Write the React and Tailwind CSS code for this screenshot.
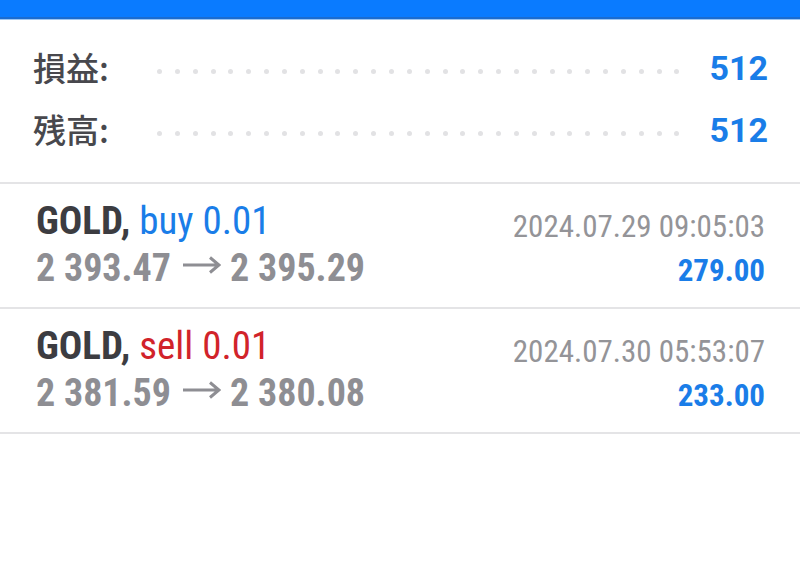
const trades = [
  {
    symbol: "GOLD",
    side: "buy",
    volume: "0.01",
    open: "2 393.47",
    close: "2 395.29",
    time: "2024.07.29 09:05:03",
    profit: "279.00",
  },
  {
    symbol: "GOLD",
    side: "sell",
    volume: "0.01",
    open: "2 381.59",
    close: "2 380.08",
    time: "2024.07.30 05:53:07",
    profit: "233.00",
  },
];

const condensed = {
  fontFamily: '"Roboto Condensed", "DejaVu Sans Condensed", "Liberation Sans Narrow", Roboto, sans-serif',
};

function Arrow() {
  return (
    <svg className="inline-block ml-[11px] mr-[9px] align-[6px]" width="39" height="20" viewBox="0 0 39 20" fill="none">
      <path d="M1 10H37M28 2.5L37 10L28 17.5" stroke="#8e8e93" strokeWidth="3" />
    </svg>
  );
}

function SummaryRow({ label, value }) {
  return (
    <div className="flex items-center h-[62px] pl-[33px] pr-[32px]">
      <span
        className="text-[33px] font-medium text-[#48484d] w-[110px]"
        style={{ fontFamily: '"Noto Sans CJK JP", Roboto, sans-serif' }}
      >
        {label}:
      </span>
      <div className="flex-1 flex justify-between items-center pl-[14px] pr-[30px] pt-[6px]">
        {Array.from({ length: 30 }).map((_, i) => (
          <span key={i} className="block w-[5px] h-[5px] rounded-full bg-[#e2e2e4]" />
        ))}
      </div>
      <span className="text-[34px] font-bold text-[#1a7de8] font-['Roboto']">{value}</span>
    </div>
  );
}

function TradeRow({ t }) {
  return (
    <div className="flex justify-between h-[125px] border-b-2 border-[#e4e4e6] pl-[36px] pr-[35px]" style={condensed}>
      <div className="flex flex-col pt-[14px]">
        <div className="text-[39px] leading-[47px]">
          <span className="font-bold text-[#3c3c41]">{t.symbol},</span>{" "}
          <span className={t.side === "buy" ? "text-[#1a7de8]" : "text-[#d1232a]"}>
            {t.side} {t.volume}
          </span>
        </div>
        <div className="text-[38px] leading-[47px] font-bold text-[#8e8e93]">
          {t.open}
          <Arrow />
          {t.close}
        </div>
      </div>
      <div className="flex flex-col items-end pt-[21px]">
        <div className="text-[31px] leading-[44px] text-[#949498]">{t.time}</div>
        <div className="text-[31px] leading-[44px] font-bold text-[#1a7de8]">{t.profit}</div>
      </div>
    </div>
  );
}

export default function App() {
  return (
    <div className="w-[800px] h-[575px] bg-white overflow-hidden">
      <div className="h-[17px] bg-[#0a7bff]" />
      <div className="h-[2px] bg-[#1b6cd0]" />
      <div className="h-[1px] bg-[#9cc6f4]" />
      <div className="pt-[17px] pb-[21px] border-b-2 border-[#e4e4e6]">
        <SummaryRow label="損益" value="512" />
        <SummaryRow label="残高" value="512" />
      </div>
      {trades.map((t, i) => (
        <TradeRow key={i} t={t} />
      ))}
    </div>
  );
}
